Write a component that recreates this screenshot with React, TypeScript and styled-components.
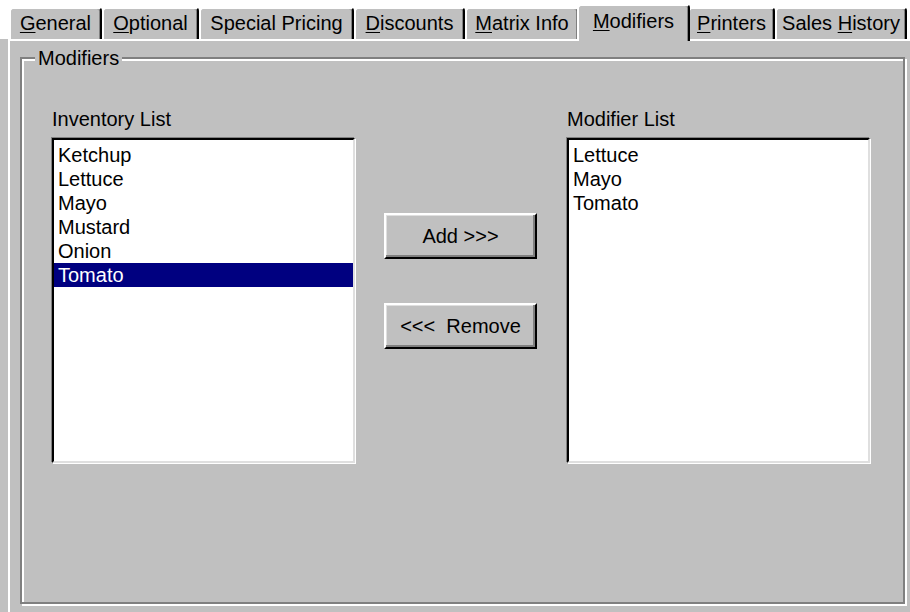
import React from 'react';
import styled, { createGlobalStyle } from 'styled-components';

const GlobalStyle = createGlobalStyle`
  html, body {
    margin: 0;
    padding: 0;
    background: #fff;
    overflow: hidden;
  }

  body {
    font-family: "Liberation Sans", Arial, sans-serif;
    font-size: 20px;
    color: #000;
  }
`;

const Dialog = styled.div`
  width: 910px;
  height: 612px;
  display: flex;
  flex-direction: column;
  overflow: hidden;
`;

const TabStrip = styled.div`
  flex-shrink: 0;
  display: flex;
  align-items: flex-end;
  height: 39px;
  padding-left: 9px;
  background: #fff;
`;

// active tab is taller and hangs 2px over the page's top edge
const Tab = styled.div<{ $width: number; $active?: boolean }>`
  position: relative;
  z-index: ${(p) => (p.$active ? 2 : 1)};
  flex-shrink: 0;
  box-sizing: border-box;
  width: ${(p) => p.$width}px;
  height: ${(p) => (p.$active ? 37 : 32)}px;
  margin: ${(p) => (p.$active ? '0 -2px -2px -2px' : '0')};
  padding-top: ${(p) => (p.$active ? 3 : 2)}px;
  background: #c0c0c0;
  border-top: 2px solid #fff;
  border-left: 2px solid #fff;
  border-right: 2px solid #000;
  border-radius: 4px 4px 0 0;
  box-shadow: inset -1px 0 0 #808080;
  text-align: center;
  line-height: 24px;
  white-space: nowrap;
`;

const Key = styled.u`
  text-decoration-thickness: 1px;
  text-underline-offset: 2px;
`;

const Body = styled.div`
  flex: 1;
  display: flex;
  padding-left: 8px;
  background: #c0c0c0;
`;

const Page = styled.div`
  flex-shrink: 0;
  box-sizing: border-box;
  width: 912px;
  padding: 16px 0 0 10px;
  border-top: 2px solid #fff;
  border-left: 2px solid #fff;
`;

// etched frame: dark line with a white one offset by 2px
const GroupBox = styled.div`
  position: relative;
  box-sizing: border-box;
  width: 885px;
  height: 547px;
  padding: 48px 0 0 30px;
  border: 2px solid #808080;
  box-shadow: inset 2px 2px 0 #fff, 2px 2px 0 #fff;
`;

const Caption = styled.span`
  position: absolute;
  top: -13px;
  left: 13px;
  padding: 0 3px;
  background: #c0c0c0;
  line-height: 24px;
`;

const Columns = styled.div`
  display: flex;
  align-items: flex-start;
`;

const ListColumn = styled.div`
  display: flex;
  flex-direction: column;
  width: 303px;
`;

const ListLabel = styled.div`
  line-height: 24px;
  margin-bottom: 7px;
`;

const ListBox = styled.div`
  box-sizing: border-box;
  height: 325px;
  padding-top: 3px;
  background: #fff;
  border: 2px solid;
  border-color: #000 #dfdfdf #dfdfdf #000;
  box-shadow: -1px -1px 0 #808080, 1px 1px 0 #fff;
`;

const ListItem = styled.div<{ $selected?: boolean }>`
  height: 24px;
  padding-left: 4px;
  line-height: 24px;
  white-space: nowrap;
  background: ${(p) => (p.$selected ? '#000080' : 'transparent')};
  color: ${(p) => (p.$selected ? '#fff' : '#000')};
`;

const ButtonColumn = styled.div`
  display: flex;
  flex-direction: column;
  gap: 44px;
  width: 153px;
  margin: 0 30px 0 29px;
  padding-top: 106px;
`;

const Button = styled.button`
  box-sizing: border-box;
  width: 153px;
  height: 46px;
  padding: 0;
  font-family: "Liberation Sans", Arial, sans-serif;
  font-size: 20px;
  line-height: 24px;
  color: #000;
  background: #c0c0c0;
  border: 2px solid;
  border-color: #fff #000 #000 #fff;
  box-shadow: inset -2px -2px 0 #808080, inset 1px 1px 0 #dfdfdf;
  white-space: pre;
`;

type TabDef = { label: string; hotkey?: number; width: number };

const tabs: TabDef[] = [
  { label: 'General', hotkey: 0, width: 93 },
  { label: 'Optional', hotkey: 0, width: 97 },
  { label: 'Special Pricing', width: 155 },
  { label: 'Discounts', hotkey: 0, width: 111 },
  { label: 'Matrix Info', hotkey: 0, width: 114 },
  { label: 'Modifiers', hotkey: 0, width: 113 },
  { label: 'Printers', hotkey: 0, width: 87 },
  { label: 'Sales History', hotkey: 6, width: 132 },
];

const inventory = ['Ketchup', 'Lettuce', 'Mayo', 'Mustard', 'Onion', 'Tomato'];
const modifiers = ['Lettuce', 'Mayo', 'Tomato'];

const TabLabel = ({ label, hotkey }: { label: string; hotkey?: number }) => {
  if (hotkey === undefined) return <>{label}</>;
  return (
    <>
      {label.slice(0, hotkey)}
      <Key>{label[hotkey]}</Key>
      {label.slice(hotkey + 1)}
    </>
  );
};

export default function App() {
  const activeTab = 'Modifiers';
  const selected = 'Tomato';

  return (
    <>
      <GlobalStyle />
      <Dialog>
        <TabStrip>
          {tabs.map((t) => (
            <Tab key={t.label} $width={t.width} $active={t.label === activeTab}>
              <TabLabel label={t.label} hotkey={t.hotkey} />
            </Tab>
          ))}
        </TabStrip>
        <Body>
          <Page>
            <GroupBox>
              <Caption>Modifiers</Caption>
              <Columns>
                <ListColumn>
                  <ListLabel>Inventory List</ListLabel>
                  <ListBox>
                    {inventory.map((item) => (
                      <ListItem key={item} $selected={item === selected}>
                        {item}
                      </ListItem>
                    ))}
                  </ListBox>
                </ListColumn>
                <ButtonColumn>
                  <Button>{'Add >>>'}</Button>
                  <Button>{'<<<  Remove'}</Button>
                </ButtonColumn>
                <ListColumn>
                  <ListLabel>Modifier List</ListLabel>
                  <ListBox>
                    {modifiers.map((item) => (
                      <ListItem key={item}>{item}</ListItem>
                    ))}
                  </ListBox>
                </ListColumn>
              </Columns>
            </GroupBox>
          </Page>
        </Body>
      </Dialog>
    </>
  );
}
